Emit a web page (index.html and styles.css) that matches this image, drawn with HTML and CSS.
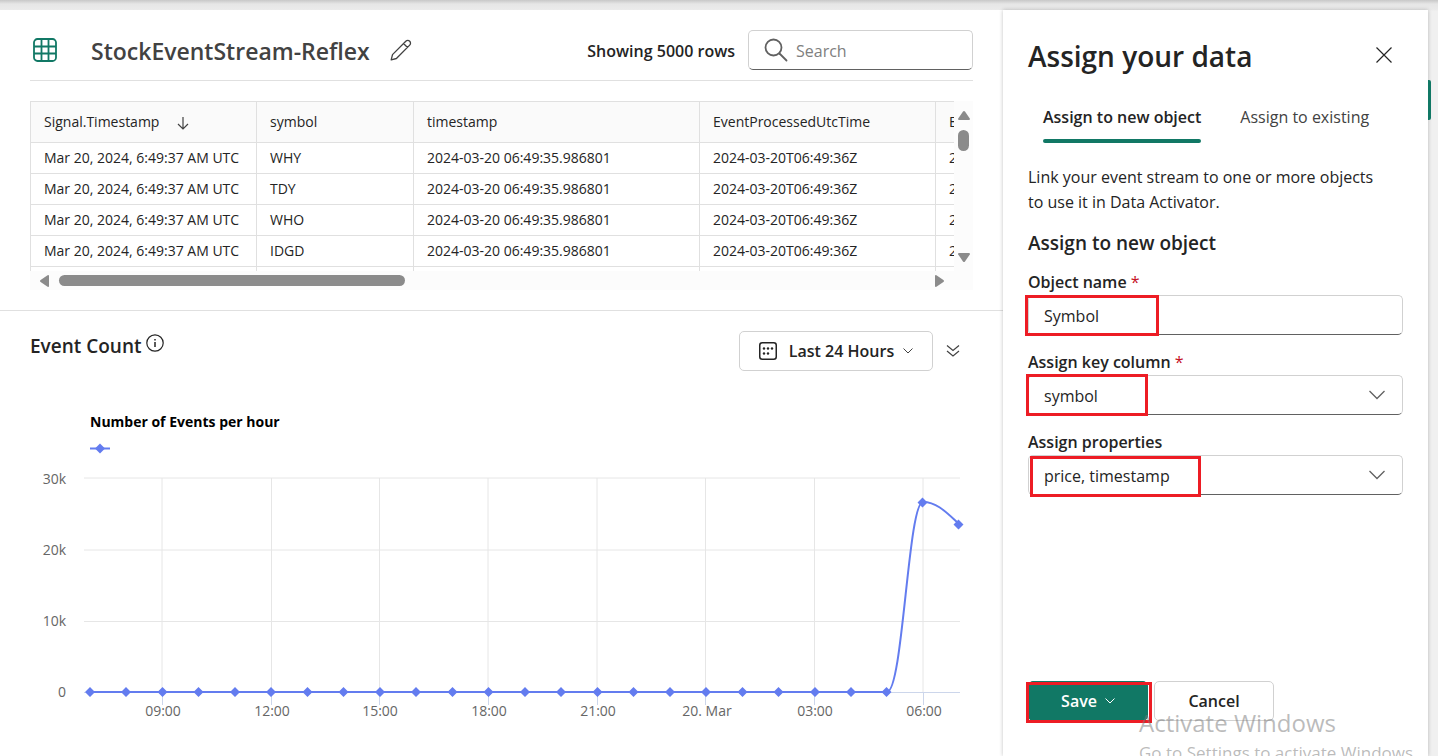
FILE: index.html
```html
<!DOCTYPE html>
<html lang="en">
<head>
<meta charset="utf-8">
<title>StockEventStream-Reflex</title>
<link rel="stylesheet" href="styles.css">
</head>
<body>
<div class="app">
  <main class="main">
    <section class="data">
      <header class="data-header">
        <svg class="grid-icon" width="24" height="24" viewBox="0 0 24 24" fill="none" stroke="#117865" stroke-width="1.800"><rect x="1" y="1" width="22" height="22" rx="3.500"/><path d="M8.500 1v22M15.500 1v22M1 8.500h22M1 15.500h22"/></svg>
        <h1 class="title">StockEventStream-Reflex</h1>
        <button class="icon-button" aria-label="Rename"><svg width="22" height="22" viewBox="0 0 22 22" fill="none" stroke="#424242" stroke-width="1.300" stroke-linejoin="round"><path d="M1.200 20.800l1.300-5.200L15.800 2.200a2.700 2.700 0 0 1 3.900 3.900L6.400 19.500zM13.500 4.500l4 4"/></svg></button>
        <span class="row-count">Showing 5000 rows</span>
        <label class="search">
          <svg width="24" height="24" viewBox="0 0 24 24" fill="none" stroke="#616161" stroke-width="1.800" stroke-linecap="round"><circle cx="9.500" cy="9.500" r="8"/><path d="M15.500 15.500l7 7"/></svg>
          <input type="search" placeholder="Search" aria-label="Search">
        </label>
      </header>
      <div class="grid-frame">
        <div class="grid-view">
          <table class="grid">
            <colgroup><col class="col-signal"><col class="col-symbol"><col class="col-time"><col class="col-processed"><col class="col-enqueued"></colgroup>
            <thead>
              <tr><th>Signal.Timestamp <svg class="sort" width="12" height="14" viewBox="0 0 12 14" fill="none" stroke="#424242" stroke-width="1.200"><path d="M6 1v12M1 8l5 5 5-5"/></svg></th><th>symbol</th><th>timestamp</th><th>EventProcessedUtcTime</th><th>EventEnqueuedUtcTime</th></tr>
            </thead>
            <tbody>
              <tr><td>Mar 20, 2024, 6:49:37 AM UTC</td><td>WHY</td><td>2024-03-20 06:49:35.986801</td><td>2024-03-20T06:49:36Z</td><td>2024-03-20T06:49:36Z</td></tr>
              <tr><td>Mar 20, 2024, 6:49:37 AM UTC</td><td>TDY</td><td>2024-03-20 06:49:35.986801</td><td>2024-03-20T06:49:36Z</td><td>2024-03-20T06:49:36Z</td></tr>
              <tr><td>Mar 20, 2024, 6:49:37 AM UTC</td><td>WHO</td><td>2024-03-20 06:49:35.986801</td><td>2024-03-20T06:49:36Z</td><td>2024-03-20T06:49:36Z</td></tr>
              <tr><td>Mar 20, 2024, 6:49:37 AM UTC</td><td>IDGD</td><td>2024-03-20 06:49:35.986801</td><td>2024-03-20T06:49:36Z</td><td>2024-03-20T06:49:36Z</td></tr>
              <tr><td></td><td></td><td></td><td></td><td></td></tr>
            </tbody>
          </table>
        </div>
        <div class="vbar">
          <svg width="12" height="9" viewBox="0 0 12 9" fill="#8b8b8b"><path d="M5 .6q1-1.200 2 0l4.800 7Q12.200 9 11 9H1Q-.2 9 .2 7.600z"/></svg>
          <span class="vthumb"></span>
          <svg class="down" width="12" height="9" viewBox="0 0 12 9" fill="#8b8b8b"><path d="M5 8.400q1 1.200 2 0l4.800-7Q12.200 0 11 0H1Q-.2 0 .2 1.400z"/></svg>
        </div>
        <div class="hbar">
          <svg width="9" height="12" viewBox="0 0 9 12" fill="#8b8b8b"><path d="M.6 5q-1.200 1 0 2l7 4.800Q9 12.200 9 11V1Q9-.2 7.600.2z"/></svg>
          <span class="htrack"><span class="hthumb"></span></span>
          <svg width="9" height="12" viewBox="0 0 9 12" fill="#8b8b8b"><path d="M8.400 5q1.200 1 0 2l-7 4.800Q0 12.200 0 11V1Q0-.2 1.400.2z"/></svg>
        </div>
      </div>
    </section>
    <section class="events">
      <header class="events-header">
        <h2 class="events-title">Event Count</h2>
        <svg class="info" width="18" height="18" viewBox="0 0 18 18" fill="none" stroke="#242424" stroke-width="1.200"><circle cx="9" cy="9" r="8.200"/><path d="M9 8v5M9 5v1.500" stroke-width="1.500"/></svg>
        <button class="button range">
          <svg width="18" height="18" viewBox="0 0 18 18" fill="#242424"><rect x=".75" y=".75" width="16.500" height="16.500" rx="2.500" fill="none" stroke="#242424" stroke-width="1.500"/><circle cx="5" cy="6.500" r="1.200"/><circle cx="9" cy="6.500" r="1.200"/><circle cx="13" cy="6.500" r="1.200"/><circle cx="5" cy="11.500" r="1.200"/><circle cx="9" cy="11.500" r="1.200"/></svg>
          <span>Last 24 Hours</span>
          <svg width="10" height="6" viewBox="0 0 10 6" fill="none" stroke="#424242"><path d="M.5.5L5 5 9.500.5"/></svg>
        </button>
        <button class="icon-button collapse" aria-label="Collapse"><svg width="14" height="14" viewBox="0 0 14 14" fill="none" stroke="#424242" stroke-width="1.200"><path d="M1 1.500l6 5 6-5M1 7l6 5 6-5"/></svg></button>
      </header>
      <svg class="chart" viewBox="0 0 943 340" role="img" aria-label="Number of Events per hour">
        <text class="chart-title" x="60" y="27">Number of Events per hour</text>
        <path class="series" d="M60 48.500h20"/><path class="mark" d="M70 43.500l5 5-5 5-5-5z"/>
        <path class="gridline" d="M54 78h876M54 150h876M54 221.500h876M132 78v214M241.500 78v214M349.500 78v214M458 78v214M567 78v214M675.500 78v214M784.500 78v214M893 78v214"/>
        <path class="axis" d="M54 292.500h876M132.500 293v12M241.500 293v12M349.500 293v12M458.500 293v12M567.500 293v12M675.500 293v12M784.500 293v12M893.500 293v12"/>
        <g class="tick y"><text x="36" y="84">30k</text><text x="36" y="155">20k</text><text x="36" y="226">10k</text><text x="36" y="297">0</text></g>
        <g class="tick x"><text x="133" y="316">09:00</text><text x="242" y="316">12:00</text><text x="350" y="316">15:00</text><text x="459" y="316">18:00</text><text x="568" y="316">21:00</text><text x="677" y="316">20. Mar</text><text x="785" y="316">03:00</text><text x="894" y="316">06:00</text></g>
        <path class="series" d="M60 292H857C873 292 878 102 893 102C907 102 917 113 929 124"/>
        <path class="mark" d="M60 287l5 5-5 5-5-5zM96 287l5 5-5 5-5-5zM132.500 287l5 5-5 5-5-5zM168.500 287l5 5-5 5-5-5zM205 287l5 5-5 5-5-5zM241 287l5 5-5 5-5-5zM277.500 287l5 5-5 5-5-5zM313.500 287l5 5-5 5-5-5zM350 287l5 5-5 5-5-5zM386 287l5 5-5 5-5-5zM422.500 287l5 5-5 5-5-5zM458.500 287l5 5-5 5-5-5zM495 287l5 5-5 5-5-5zM531 287l5 5-5 5-5-5zM567.500 287l5 5-5 5-5-5zM603.500 287l5 5-5 5-5-5zM640 287l5 5-5 5-5-5zM676 287l5 5-5 5-5-5zM712.500 287l5 5-5 5-5-5zM748.500 287l5 5-5 5-5-5zM785 287l5 5-5 5-5-5zM821 287l5 5-5 5-5-5zM856.500 287l5 5-5 5-5-5zM892.500 97.500l5 5-5 5-5-5zM928.500 119.500l5 5-5 5-5-5z"/>
      </svg>
    </section>
  </main>
  <aside class="panel">
    <header class="panel-header">
      <h2 class="panel-title">Assign your data</h2>
      <button class="icon-button" aria-label="Close"><svg width="16" height="16" viewBox="0 0 16 16" fill="none" stroke="#242424" stroke-width="1.200"><path d="M.5.5l15 15M15.500.5l-15 15"/></svg></button>
    </header>
    <div class="tabs" role="tablist">
      <button class="tab active" role="tab" aria-selected="true">Assign to new object</button>
      <button class="tab" role="tab" aria-selected="false">Assign to existing</button>
    </div>
    <p class="intro">Link your event stream to one or more objects to use it in Data Activator.</p>
    <h3 class="form-title">Assign to new object</h3>
    <form class="form">
      <div class="field">
        <label for="object-name">Object name <span class="required">*</span></label>
        <div class="control"><input class="box" id="object-name" type="text" value="Symbol"><span class="callout name"></span></div>
      </div>
      <div class="field">
        <label for="key-column">Assign key column <span class="required">*</span></label>
        <div class="control"><select class="box" id="key-column"><option>symbol</option></select><svg class="chevron" width="16" height="10" viewBox="0 0 16 10" fill="none" stroke="#616161" stroke-width="1.300"><path d="M.5 1L8 8.500 15.500 1"/></svg><span class="callout key"></span></div>
      </div>
      <div class="field">
        <label for="properties">Assign properties</label>
        <div class="control"><select class="box" id="properties"><option>price, timestamp</option></select><svg class="chevron" width="16" height="10" viewBox="0 0 16 10" fill="none" stroke="#616161" stroke-width="1.300"><path d="M.5 1L8 8.500 15.500 1"/></svg><span class="callout props"></span></div>
      </div>
      <div class="actions">
        <div class="control"><button class="button save" type="button"><span>Save</span><svg width="10" height="6" viewBox="0 0 10 6" fill="none" stroke="#fff"><path d="M.5.5L5 5 9.500.5"/></svg></button><span class="callout primary"></span></div>
        <button class="button cancel" type="button">Cancel</button>
      </div>
    </form>
  </aside>
  <div class="rail"><span class="rail-mark"></span></div>
</div>
<div class="watermark"><div class="watermark-title">Activate Windows</div><div class="watermark-text">Go to Settings to activate Windows.</div></div>
</body>
</html>
```
FILE: styles.css
```css
* { box-sizing: border-box; }
body {
  margin: 0;
  height: 100vh;
  overflow: hidden;
  position: relative;
  background: linear-gradient(#c8c8c8, #e6e6e6 4px, #ebebeb 10px, #f0f0f0 11px);
  color: #242424;
  font-family: "Open Sans", "Noto Sans", sans-serif;
  font-size: 16px;
}
h1, h2, h3, p { margin: 0; font-weight: 600; }
button, input, select { font: inherit; color: inherit; }
svg { flex: none; display: block; }
.app { display: flex; height: 100%; padding-top: 10px; }
.main { flex: 1; min-width: 0; background: #fff; overflow: hidden; }
.panel {
  position: relative;
  width: 425px;
  flex: none;
  display: flex;
  flex-direction: column;
  padding: 20px 25px 35px;
  background: #fff;
  box-shadow: 0 0 4px rgba(0, 0, 0, .24);
}
.rail { width: 10px; flex: none; padding-top: 70px; position: relative; }
.rail-mark { display: block; width: 3px; height: 40px; background: #117865; border-radius: 0 2px 2px 0; }

.data { padding: 20px 30px; border-bottom: 1px solid #e0e0e0; }
.data-header {
  display: flex;
  align-items: center;
  height: 51px;
  padding-bottom: 10px;
  border-bottom: 1px solid #e0e0e0;
}
.grid-icon { margin: 0 34px 0 3px; }
.title { padding-top: 2px; font-size: 23px; color: #424242; }
.icon-button { border: 0; background: none; padding: 0; display: grid; place-items: center; }
.title + .icon-button { margin-left: 20px; }
.row-count { margin-left: auto; padding-top: 2px; font-weight: 600; }
.search {
  display: flex;
  align-items: center;
  gap: 8px;
  width: 225px;
  height: 40px;
  margin-left: 13px;
  padding: 0 15px;
  border: 1px solid #d1d1d1;
  border-bottom-color: #616161;
  border-radius: 5px;
}
.search input { min-width: 0; flex: 1; border: 0; padding: 2px 0 0; outline: 0; background: none; }
.search input::placeholder { color: #808080; }

.grid-frame {
  display: grid;
  grid-template-columns: minmax(0, 1fr) 19px;
  grid-template-rows: 170px 19px;
  margin-top: 20px;
  background: #fcfcfc;
}
.grid-view { overflow: hidden; background: #fff; border-left: 1px solid #e0e0e0; border-top: 1px solid #e0e0e0; }
.grid { width: 1110px; table-layout: fixed; border-collapse: separate; border-spacing: 0; font-size: 14px; }
.col-signal { width: 226px; }
.col-symbol { width: 157px; }
.col-time { width: 286px; }
.col-processed { width: 236px; }
.grid th, .grid td {
  height: 31px;
  padding: 0 12px 2px 13px;
  border-right: 1px solid #e0e0e0;
  border-bottom: 1px solid #e0e0e0;
  text-align: left;
  font-weight: 400;
  white-space: nowrap;
  overflow: hidden;
}
.grid th { height: 41px; background: #fafafa; }
.sort { display: inline-block; margin-left: 14px; vertical-align: middle; }
.vbar { display: flex; flex-direction: column; align-items: center; padding: 10px 0 9px; }
.vthumb { width: 11px; height: 21px; margin-top: 10px; border-radius: 6px; background: #8b8b8b; }
.down { margin-top: auto; }
.hbar { display: flex; align-items: center; gap: 10px; padding: 0 10px; }
.htrack { flex: 1; }
.hthumb { display: block; width: 40%; height: 11px; border-radius: 6px; background: #8b8b8b; }

.events { padding: 20px 30px; }
.events-header { display: flex; align-items: center; height: 40px; }
.events-title { font-size: 19px; line-height: 30px; margin-bottom: 10px; }
.info { margin: 0 0 16px 4px; }
.button {
  display: flex;
  align-items: center;
  justify-content: center;
  height: 40px;
  border: 1px solid #d1d1d1;
  border-radius: 5px;
  background: #fff;
  font-weight: 600;
}
.range { width: 194px; margin-left: auto; gap: 9px; }
.range span { margin-left: 3px; }
.collapse { margin: 0 13px; width: 14px; }
.chart { width: 100%; height: auto; margin-top: 29px; }
.chart text { font-size: 14px; fill: #666; }
.chart .chart-title { font-weight: 700; fill: #000; }
.y text { text-anchor: end; }
.x text { text-anchor: middle; }
.gridline { stroke: #e6e6e6; fill: none; }
.axis { stroke: #ccd6eb; fill: none; }
.series { stroke: #637cef; stroke-width: 2; fill: none; }
.mark { fill: #637cef; }

.panel-header { display: flex; justify-content: space-between; align-items: center; height: 50px; padding-right: 11px; }
.panel-title { padding-top: 2px; font-size: 28px; }
.tabs { display: flex; gap: 9px; margin-top: 12px; }
.tab {
  position: relative;
  height: 51px;
  padding: 0 15px 2px;
  border: 0;
  background: none;
  color: #424242;
  white-space: nowrap;
}
.tab.active { font-weight: 600; color: #242424; }
.tab.active::after { content: ""; position: absolute; left: 15px; right: 15px; bottom: 0; height: 4px; border-radius: 2px; background: #117865; }
.intro { margin-top: 22px; padding-right: 16px; font-weight: 400; line-height: 25px; }
.form-title { margin-top: 14px; font-size: 19px; line-height: 28px; }
.form { flex: 1; display: flex; flex-direction: column; gap: 14px; margin-top: 12px; }
.field label { display: block; line-height: 26px; font-weight: 600; }
.required { color: #c50f1f; font-weight: 400; }
.control { position: relative; }
.box {
  display: block;
  width: 100%;
  height: 40px;
  padding: 2px 15px 0;
  appearance: none;
  background: #fff;
  border: 1px solid #d1d1d1;
  border-bottom-color: #616161;
  border-radius: 5px;
}
.chevron { position: absolute; right: 18px; top: 15px; pointer-events: none; }
.callout { position: absolute; border: 3px solid #ed1c24; pointer-events: none; }
.name { left: -3px; top: 0; width: 134px; height: 41px; }
.key { left: -2px; top: -1px; width: 122px; height: 42px; }
.props { left: 2px; top: 1px; width: 171px; height: 41px; }
.primary { left: -2px; top: 1px; width: 126px; height: 41px; }
.actions { display: flex; gap: 6px; margin-top: auto; }
.save { width: 120px; gap: 8px; background: #117865; border-color: #117865; color: #fff; }
.cancel { width: 120px; }

.watermark { position: absolute; left: 1139px; bottom: -10px; color: rgba(120, 120, 120, .5); pointer-events: none; white-space: nowrap; }
.watermark-title { font-size: 24px; line-height: 34px; }
.watermark-text { font-size: 17px; line-height: 26px; }
```
